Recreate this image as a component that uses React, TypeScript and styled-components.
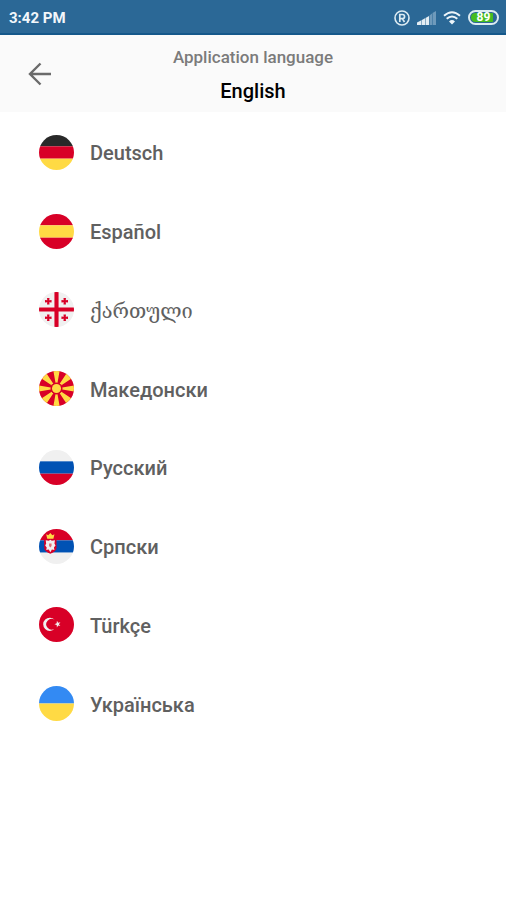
import React from "react";
import styled, { createGlobalStyle } from "styled-components";

const GlobalStyle = createGlobalStyle`
  * { box-sizing: border-box; }
  body { margin: 0; background: #fff; font-family: Roboto, "DejaVu Sans", sans-serif; }
  button { font: inherit; border: 0; background: none; cursor: pointer; }
`;

const Screen = styled.main`
  min-height: 100vh;
  background: #fff;
`;

const StatusBar = styled.div`
  display: flex;
  align-items: center;
  justify-content: space-between;
  height: 35px;
  padding: 2px 7px 0 9px;
  border-bottom: 2px solid #15588a;
  background: #2b6896;
  color: #f2f7fb;
`;

const Clock = styled.time`
  font-size: 15px;
  line-height: 20px;
  font-weight: 700;
`;

const StatusIcons = styled.div`
  display: flex;
  align-items: center;
  gap: 7px;

  svg { display: block; }
`;

const Battery = styled.div`
  width: 31px;
  height: 15px;
  padding: 1px;
  border: 2px solid #dcebf2;
  border-radius: 8px;
`;

const BatteryLevel = styled.div`
  width: 100%;
  height: 9px;
  border-radius: 5px;
  background: linear-gradient(to right, #46bd20 88%, #2b6896 88%);
  color: #fff;
  font-size: 12px;
  line-height: 9px;
  font-weight: 700;
  text-align: center;
`;

const Header = styled.header`
  display: grid;
  grid-template-columns: 80px 1fr 80px;
  align-items: center;
  height: 77px;
  background: #fafafa;
`;

const BackButton = styled.button`
  display: flex;
  align-items: center;
  justify-content: center;
  height: 48px;
  padding: 0;
  color: #6b6b6b;
`;

const Titles = styled.div`
  display: flex;
  flex-direction: column;
  gap: 10px;
  text-align: center;
`;

const Caption = styled.div`
  color: #7b7b7b;
  font-size: 17px;
  line-height: 24px;
  font-weight: 500;
`;

const Current = styled.h1`
  margin: 0;
  color: #000;
  font-size: 20px;
  line-height: 24px;
  font-weight: 500;
`;

const LanguageList = styled.ul`
  display: grid;
  grid-auto-rows: 1fr;
  min-height: 630px;
  margin: 0;
  padding: 0;
  list-style: none;
`;

const LanguageItem = styled.li`
  display: flex;
`;

const LanguageButton = styled.button`
  display: flex;
  flex: 1;
  align-items: center;
  gap: 16px;
  padding: 2px 39px 0;
  color: #606060;
  text-align: left;
`;

const LanguageName = styled.span<{ $georgian?: boolean }>`
  padding-top: 2px;
  font-family: ${(p) => (p.$georgian ? '"DejaVu Serif", serif' : "inherit")};
  font-size: 20px;
  line-height: 24px;
  font-weight: ${(p) => (p.$georgian ? 400 : 500)};
`;

const FlagImage = styled.svg`
  display: block;
  flex: none;
  width: 35px;
  height: 35px;
  border-radius: 50%;
`;

const Stripes = ({ colors, cuts }: { colors: string[]; cuts: number[] }) => (
  <>
    {colors.map((c, i) => (
      <rect key={c + i} y={cuts[i]} width="34" height={cuts[i + 1] - cuts[i]} fill={c} />
    ))}
  </>
);

const Georgia = () => (
  <>
    <rect width="34" height="34" fill="#f0f0f0" />
    <path d="M0 17H34M17 0V34" stroke="#d80027" strokeWidth="4" />
    {[[9, 9], [25, 9], [9, 25], [25, 25]].map(([x, y]) => (
      <path
        key={`${x}-${y}`}
        transform={`translate(${x} ${y})`}
        d="M-1.200-3.200H1.200L1-1 3.200-1.200V1.200L1 1 1.200 3.200H-1.200L-1 1-3.200 1.200V-1.200L-1-1Z"
        fill="#d80027"
      />
    ))}
  </>
);

const Macedonia = () => (
  <>
    <rect width="34" height="34" fill="#d80027" />
    <path
      d="M14 0H20L17 17ZM34 14V20L17 17ZM20 34H14L17 17ZM0 20V14L17 17ZM2 7 7 2 17 17ZM27 2 32 7 17 17ZM32 27 27 32 17 17ZM7 32 2 27 17 17Z"
      fill="#ffda44"
    />
    <circle cx="17" cy="17" r="5.8" fill="#d80027" />
    <circle cx="17" cy="17" r="4.4" fill="#ffda44" />
  </>
);

const Serbia = () => (
  <>
    <Stripes colors={["#d80027", "#0052b4", "#f0f0f0"]} cuts={[0, 11, 23, 34]} />
    <path d="M5 10H17V18Q17 22 11 24Q5 22 5 18Z" fill="#d80027" />
    <path d="M7 5 9 6 11 4 13 6 15 5 14 9.500H8Z" fill="#ffda44" />
    <path
      d="M11 10.500 12.500 11.500 15.500 11 15 14 16 16 14.500 18 15 20.500 12.500 20 11 22.500 9.500 20 7 20.500 7.500 18 6 16 7 14 6.500 11 9.500 11.500Z"
      fill="#f0f0f0"
    />
    <path d="M9.800 14H12.200V16.500L11 18 9.800 16.500Z" fill="#e26a70" />
  </>
);

const Turkey = () => (
  <>
    <rect width="34" height="34" fill="#d80027" />
    <path d="M15.200 12.500A6.400 6.400 0 1 0 15.200 21.100A5.200 5.200 0 1 1 15.200 12.500Z" fill="#f0f0f0" />
    <path d="M17.400 13.400 18.600 15.300 20.800 14.800 19.300 16.700 20.800 18.500 18.600 18 17.400 20 17.200 17.600 15 16.800 17.200 15.900Z" fill="#f0f0f0" />
  </>
);

const languages = [
  { code: "de", name: "Deutsch", art: <Stripes colors={["#292929", "#d80027", "#ffda44"]} cuts={[0, 11, 23, 34]} /> },
  { code: "es", name: "Español", art: <Stripes colors={["#d80027", "#ffda44", "#d80027"]} cuts={[0, 11, 23, 34]} /> },
  { code: "ka", name: "ქართული", art: <Georgia /> },
  { code: "mk", name: "Македонски", art: <Macedonia /> },
  { code: "ru", name: "Русский", art: <Stripes colors={["#f0f0f0", "#0052b4", "#d80027"]} cuts={[0, 11, 23, 34]} /> },
  { code: "sr", name: "Српски", art: <Serbia /> },
  { code: "tr", name: "Türkçe", art: <Turkey /> },
  { code: "uk", name: "Українська", art: <Stripes colors={["#338af3", "#ffda44"]} cuts={[0, 17, 34]} /> },
];

const RegisteredIcon = () => (
  <svg width="16" height="16" viewBox="0 0 16 16" fill="none" stroke="#dcebf2" aria-hidden="true">
    <circle cx="8" cy="8" r="7" strokeWidth="1.6" />
    <path d="M5.800 12V4.500H8.500A2 2 0 0 1 8.500 8.600H5.800M8.300 8.600 10.500 12" strokeWidth="1.7" />
  </svg>
);

const SignalIcon = () => (
  <svg width="19" height="14" viewBox="0 0 19 14" aria-hidden="true">
    <path d="M0 11.500 4 9.500V14H0ZM4.500 9.200 8 7.200V14H4.500ZM8.500 7 12 5V14H8.500Z" fill="#e3edf3" />
    <path d="M12.500 4.500 15 2.500V14H12.500ZM15.500 2 19 0V14H15.500Z" fill="#6f9abb" />
  </svg>
);

const WifiIcon = () => (
  <svg width="18" height="14" viewBox="0 0 18 14" fill="none" stroke="#edf5fa" strokeWidth="1.9" aria-hidden="true">
    <path d="M1 4.800Q9-2.400 17 4.800" />
    <path d="M3.700 7.800Q9 3 14.300 7.800" />
    <path d="M6 10.500Q9 7.700 12 10.500L9 13.500Z" fill="#edf5fa" stroke="none" />
  </svg>
);

const BackIcon = () => (
  <svg width="24" height="24" viewBox="0 0 24 24" fill="none" stroke="currentColor" strokeWidth="2.4" aria-hidden="true">
    <path d="M23 12H2M12.500 1.500 2 12 12.500 22.500" />
  </svg>
);

export default function App() {
  return (
    <>
      <GlobalStyle />
      <Screen>
        <StatusBar>
          <Clock>3:42 PM</Clock>
          <StatusIcons>
            <RegisteredIcon />
            <SignalIcon />
            <WifiIcon />
            <Battery>
              <BatteryLevel>89</BatteryLevel>
            </Battery>
          </StatusIcons>
        </StatusBar>
        <Header>
          <BackButton type="button" aria-label="Back">
            <BackIcon />
          </BackButton>
          <Titles>
            <Caption>Application language</Caption>
            <Current>English</Current>
          </Titles>
        </Header>
        <LanguageList>
          {languages.map(({ code, name, art }) => (
            <LanguageItem key={code}>
              <LanguageButton type="button" lang={code}>
                <FlagImage viewBox="0 0 34 34" aria-hidden="true">{art}</FlagImage>
                <LanguageName $georgian={code === "ka"}>{name}</LanguageName>
              </LanguageButton>
            </LanguageItem>
          ))}
        </LanguageList>
      </Screen>
    </>
  );
}
